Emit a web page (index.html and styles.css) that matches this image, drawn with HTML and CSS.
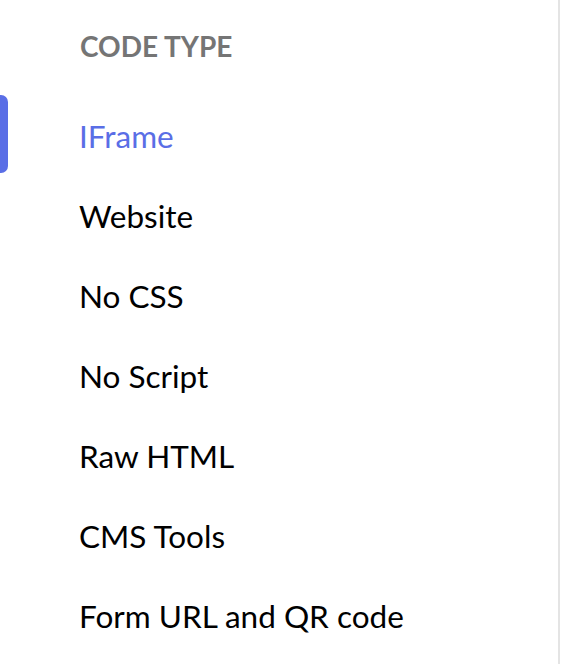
FILE: index.html
```html
<!DOCTYPE html>
<html>
<head>
<meta charset="utf-8">
<link rel="stylesheet" href="styles.css">
</head>
<body>
<nav class="panel">
  <h2 class="title">CODE TYPE</h2>
  <ul class="list">
    <li class="item active">IFrame</li>
    <li class="item">Website</li>
    <li class="item">No CSS</li>
    <li class="item">No Script</li>
    <li class="item">Raw HTML</li>
    <li class="item">CMS Tools</li>
    <li class="item">Form URL and QR code</li>
  </ul>
</nav>
</body>
</html>
```
FILE: styles.css
```css
html, body {
  margin: 0;
  padding: 0;
  background: #fff;
}
body {
  font-family: Lato, "Noto Sans", sans-serif;
  width: 562px;
  height: 664px;
  overflow: hidden;
}
.panel {
  width: 560px;
  height: 664px;
  box-sizing: border-box;
  border-right: 2px solid #e4e4e4;
  padding-top: 26px;
}
.title {
  margin: 0 0 0 80px;
  font-size: 28px;
  font-weight: 700;
  color: #757575;
  line-height: 40px;
}
.list {
  list-style: none;
  margin: 30px 0 0 0;
  padding: 0;
}
.item {
  position: relative;
  height: 80px;
  line-height: 80px;
  padding-left: 79px;
  font-size: 31.5px;
  color: #000;
}
.item.active {
  color: #5a6ee6;
}
.item.active::before {
  content: "";
  position: absolute;
  left: 0;
  top: -1px;
  width: 8px;
  height: 78px;
  background: #5a6ee6;
  border-radius: 0 7px 7px 0;
}
```
